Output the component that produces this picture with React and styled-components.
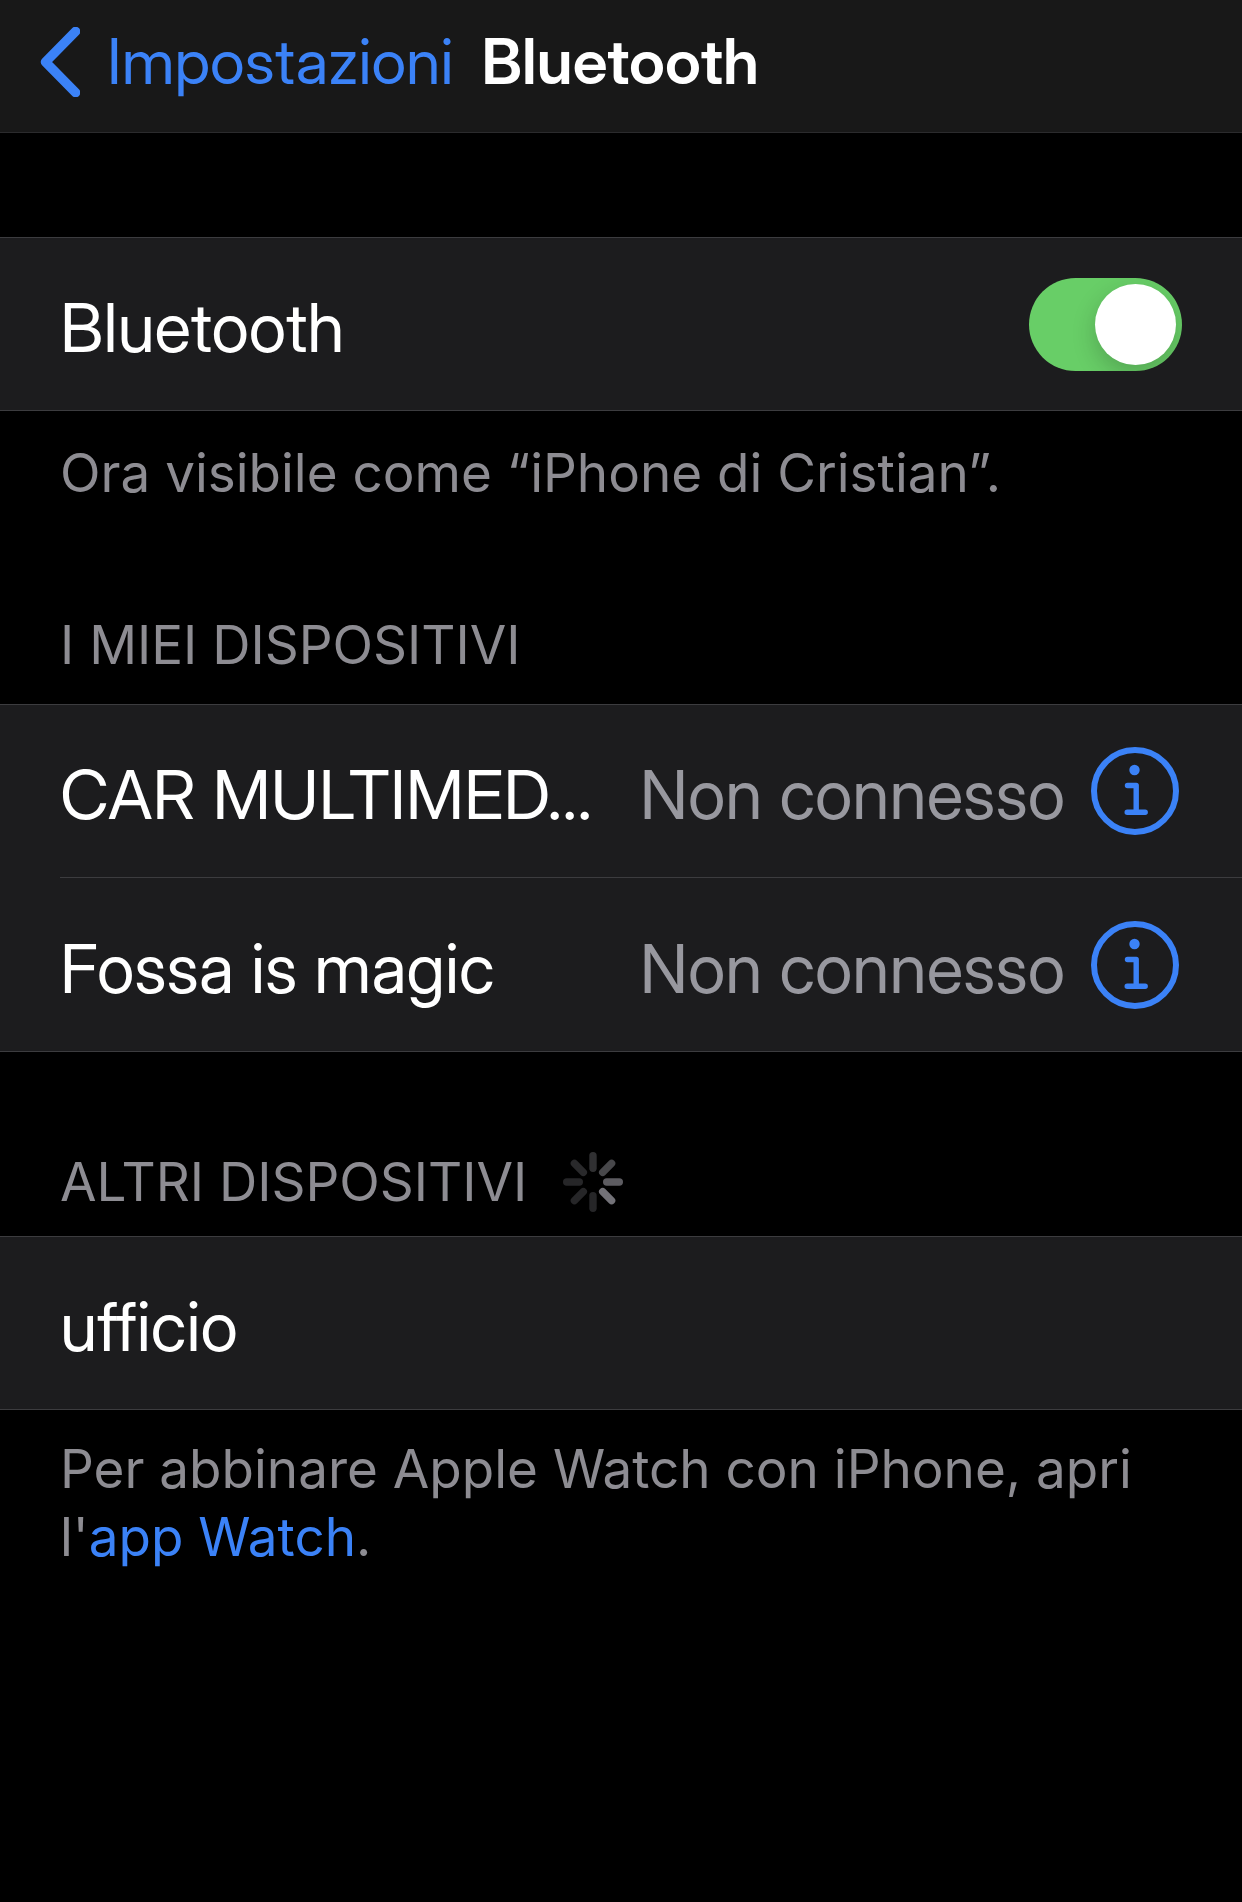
import React, { useState } from 'react';
import styled, { createGlobalStyle } from 'styled-components';

const GlobalStyle = createGlobalStyle`
    * {
        box-sizing: border-box;
    }

    body {
        margin: 0;
        background-color: #000000;
        color: #ffffff;
        font-family: "Inter Display", Inter, "Liberation Sans", sans-serif;
        font-variant-ligatures: none;
    }

    button {
        margin: 0;
        padding: 0;
        border: none;
        background: none;
        color: inherit;
        font: inherit;
        font-variant-ligatures: inherit;
        text-align: left;
        cursor: pointer;
    }
`;

const Page = styled.div`
    min-height: 100vh;
    background-color: #000000;
`;

const NavBar = styled.header`
    display: flex;
    align-items: center;
    height: 133px;
    padding: 0 40px 9px;
    background-color: #181818;
    border-bottom: 1px solid #2b2b2d;
    font-size: 63px;
    line-height: 75px;
`;

const BackLink = styled.a`
    display: flex;
    align-items: center;
    gap: 27px;
    color: #3b82f7;
    text-decoration: none;
`;

const Title = styled.h1`
    margin: 0 0 0 28px;
    font-size: 63px;
    font-weight: 600;
`;

const Section = styled.section`
    margin-top: ${(props) => props.$top}px;
`;

const SectionTitle = styled.h2`
    display: flex;
    align-items: center;
    gap: 36px;
    margin: 0;
    padding: 0 60px ${(props) => props.$bottom}px;
    color: #8d8c92;
    font-family: Inter, "Liberation Sans", sans-serif;
    font-size: 53px;
    font-weight: 400;
    line-height: 68px;
`;

const Group = styled.ul`
    margin: 0;
    padding: 0;
    list-style: none;
    background-color: #1c1c1e;
    border-top: 1px solid #3c3c3f;
    border-bottom: 1px solid #3c3c3f;
`;

const Row = styled.li`
    display: flex;
    align-items: center;
    gap: 26px;
    height: 172px;
    margin-left: 60px;
    padding-right: 63px;
    font-size: 68px;
    line-height: 80px;

    & + & {
        height: 174px;
        border-top: 1px solid #3c3c3f;
    }
`;

const RowLabel = styled.label`
    flex: 1;
    padding-top: 6px;
`;

const DeviceButton = styled.button`
    display: flex;
    flex: 1;
    justify-content: space-between;
    min-width: 0;
    padding-top: 6px;
    white-space: nowrap;
`;

const DeviceStatus = styled.span`
    color: #98989f;
`;

const InfoButton = styled.button`
    display: flex;
    color: #3b82f7;
`;

const Switch = styled.input`
    appearance: none;
    flex: none;
    width: 153px;
    height: 93px;
    margin: 0 -3px 0 0;
    padding: 6px;
    overflow: hidden;
    border-radius: 47px;
    background-color: #39393d;
    cursor: pointer;

    &::before {
        content: '';
        display: block;
        width: 81px;
        height: 81px;
        border-radius: 50%;
        background-color: #ffffff;
        box-shadow: 0 9px 24px rgba(0, 0, 0, 0.2);
    }

    &:checked {
        background-color: #68ce67;
    }

    &:checked::before {
        margin-left: auto;
    }
`;

const Note = styled.p`
    margin: 0;
    padding: ${(props) => props.$top}px 60px 0;
    color: #8d8c92;
    font-family: Inter, "Liberation Sans", sans-serif;
    font-size: 53px;
    line-height: 68px;
`;

const NoteLink = styled.a`
    color: #3b82f7;
    text-decoration: none;
`;

const BackIcon = () => (
    <svg width="40" height="70" viewBox="0 0 40 70" fill="none" aria-hidden="true">
        <path d="M35.5 4.5 L5.5 35 L35.5 65.5" stroke="currentColor" strokeWidth="9.6" strokeLinecap="round" strokeLinejoin="round" />
    </svg>
);

const InfoIcon = () => (
    <svg width="88" height="88" viewBox="0 0 88 88" fill="none" aria-hidden="true">
        <circle cx="44" cy="44" r="41" stroke="currentColor" strokeWidth="6" />
        <circle cx="43.5" cy="23" r="5.2" fill="currentColor" />
        <path d="M36.5 38.5 H45.2 V65 M36.2 65.2 H54.2" stroke="currentColor" strokeWidth="5.4" strokeLinecap="round" strokeLinejoin="round" />
    </svg>
);

// one colour per blade, clockwise from the top
const blades = ['#303032', '#48484b', '#5d5c61', '#737278', '#262628', '#262628', '#262628', '#29292b'];

const Spinner = () => (
    <svg width="60" height="60" viewBox="0 0 60 60" role="img" aria-label="Ricerca in corso">
        {blades.map((color, i) => (
            <rect key={i} x="26.3" y="0" width="7.4" height="20" rx="3.7" fill={color} transform={`rotate(${i * 45} 30 30)`} />
        ))}
    </svg>
);

const myDevices = [
    { name: 'CAR MULTIMED...', status: 'Non connesso' },
    { name: 'Fossa is magic', status: 'Non connesso' },
];

const App = () => {
    const [enabled, setEnabled] = useState(true);

    return (
        <>
            <GlobalStyle />
            <Page>
                <NavBar>
                    <BackLink href="#impostazioni"><BackIcon />Impostazioni</BackLink>
                    <Title>Bluetooth</Title>
                </NavBar>
                <main>
                    <Section $top={104}>
                        <Group>
                            <Row>
                                <RowLabel htmlFor="bluetooth">Bluetooth</RowLabel>
                                <Switch
                                    id="bluetooth"
                                    type="checkbox"
                                    role="switch"
                                    checked={enabled}
                                    onChange={(e) => setEnabled(e.target.checked)}
                                />
                            </Row>
                        </Group>
                        <Note $top={28}>Ora visibile come “iPhone di Cristian”.</Note>
                    </Section>
                    <Section $top={104}>
                        <SectionTitle $bottom={25}>I MIEI DISPOSITIVI</SectionTitle>
                        <Group>
                            {myDevices.map((device) => (
                                <Row key={device.name}>
                                    <DeviceButton type="button">
                                        <span>{device.name}</span>
                                        <DeviceStatus>{device.status}</DeviceStatus>
                                    </DeviceButton>
                                    <InfoButton type="button" aria-label={`Info su ${device.name}`}>
                                        <InfoIcon />
                                    </InfoButton>
                                </Row>
                            ))}
                        </Group>
                    </Section>
                    <Section $top={96}>
                        <SectionTitle $bottom={20}>ALTRI DISPOSITIVI<Spinner /></SectionTitle>
                        <Group>
                            <Row>
                                <DeviceButton type="button">ufficio</DeviceButton>
                            </Row>
                        </Group>
                        <Note $top={25}>
                            Per abbinare Apple Watch con iPhone, apri l'<NoteLink href="#watch">app Watch</NoteLink>.
                        </Note>
                    </Section>
                </main>
            </Page>
        </>
    );
};

export default App;
